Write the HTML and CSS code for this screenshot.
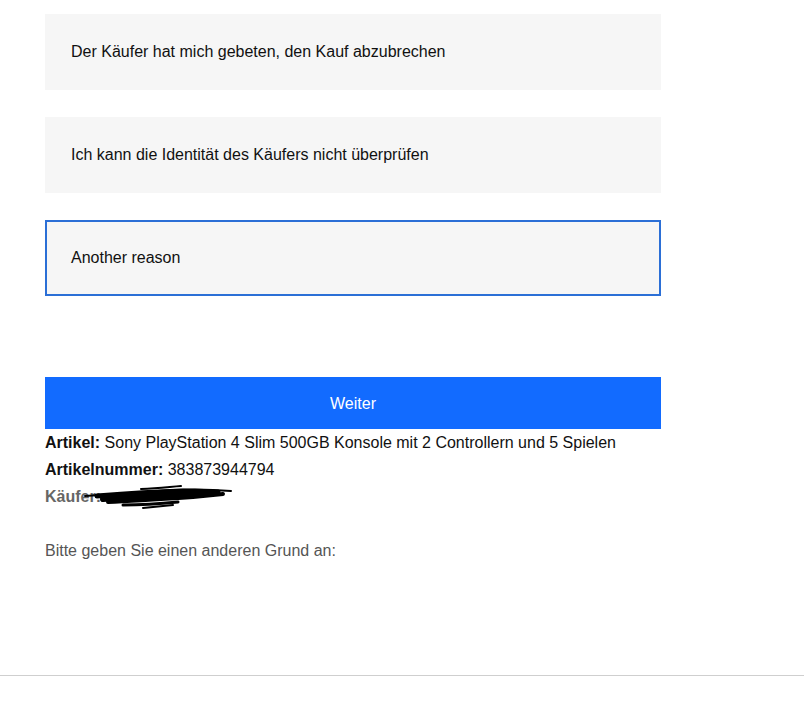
FILE: index.html
```html
<!DOCTYPE html>
<html lang="de">
<head>
<meta charset="utf-8">
<title>Grund</title>
<link rel="stylesheet" href="styles.css">
</head>
<body>
<main class="page">
  <div class="options">
    <div class="option">Der Käufer hat mich gebeten, den Kauf abzubrechen</div>
    <div class="option">Ich kann die Identität des Käufers nicht überprüfen</div>
    <div class="option selected">Another reason</div>
  </div>
  <button class="next">Weiter</button>
  <div class="details">
    <div class="row"><b>Artikel:</b> Sony PlayStation 4 Slim 500GB Konsole mit 2 Controllern und 5 Spielen</div>
    <div class="row"><b>Artikelnummer:</b> 383873944794</div>
    <div class="row buyer"><b class="muted">Käufer:</b>
      <svg class="redact" width="150" height="26" viewBox="0 0 150 26">
        <path d="M2 12 C30 10 60 8 90 6 C110 5 125 5 148 7" stroke="#000" stroke-width="2" fill="none" stroke-linecap="round"/>
        <path d="M58 5 C75 4 85 3 98 2" stroke="#000" stroke-width="2" fill="none" stroke-linecap="round"/>
        <path d="M14 12 C40 10 70 8 100 7 C115 7 125 8 135 8" stroke="#000" stroke-width="5" fill="none" stroke-linecap="round"/>
        <path d="M20 15 C50 13 80 11 120 10" stroke="#000" stroke-width="6" fill="none" stroke-linecap="round"/>
        <path d="M25 18 C50 17 80 15 110 13 C120 12 130 11 140 10" stroke="#000" stroke-width="4" fill="none" stroke-linecap="round"/>
        <path d="M40 21 C60 21 75 20 95 18" stroke="#000" stroke-width="3" fill="none" stroke-linecap="round"/>
        <path d="M60 24 C70 23 80 22 90 21" stroke="#000" stroke-width="2" fill="none" stroke-linecap="round"/>
      </svg>
    </div>
  </div>
  <p class="hint">Bitte geben Sie einen anderen Grund an:</p>
</main>
<footer class="footer"></footer>
</body>
</html>
```

FILE: styles.css
```css
html, body {
  margin: 0;
  padding: 0;
  background: #fff;
  font-family: "Liberation Sans", Arial, sans-serif;
  font-size: 16px;
  color: #111;
}
.page {
  width: 616px;
  padding: 14px 0 0 45px;
  height: 661px;
  box-sizing: content-box;
}
.options {
  display: flex;
  flex-direction: column;
  gap: 27px;
}
.option {
  height: 76px;
  box-sizing: border-box;
  background: #f6f6f6;
  border: 2px solid #f6f6f6;
  display: flex;
  align-items: center;
  padding-left: 24px;
}
.option.selected {
  border-color: #2b6fd6;
}
.next {
  display: block;
  width: 616px;
  height: 52px;
  margin-top: 81px;
  border: 0;
  background: #126bff;
  color: #fff;
  font-family: inherit;
  font-size: 16px;
  padding: 2px 0 0;
}
.details .row {
  line-height: 27px;
  height: 27px;
}
.buyer {
  position: relative;
}
.muted {
  color: #666;
}
.redact {
  position: absolute;
  left: 38px;
  top: 1px;
}
.hint {
  margin: 27px 0 0;
  line-height: 27px;
  color: #555;
}
.footer {
  border-top: 1px solid #cfcfcf;
  height: 33px;
}
```
